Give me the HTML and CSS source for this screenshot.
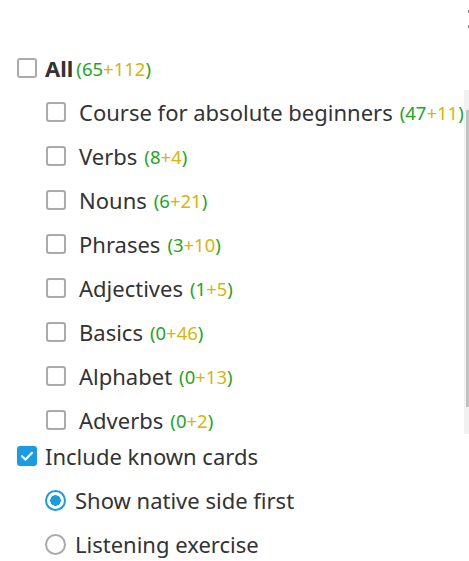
FILE: index.html
```html
<!DOCTYPE html>
<html>
<head>
<meta charset="utf-8">
<link rel="stylesheet" href="styles.css">
</head>
<body>
<div class="page">
  <div class="header"><span class="mark"></span><span class="mark"></span></div>
  <div class="row top">
    <span class="box"></span>
    <span class="label bold">All</span><span class="count tight"><span class="g">(65</span><span class="y">+112</span><span class="g">)</span></span>
  </div>
  <div class="list">
    <div class="items">
      <div class="row sub"><span class="box"></span><span class="label">Course for absolute beginners</span><span class="count"><span class="g">(47</span><span class="y">+11</span><span class="g">)</span></span></div>
      <div class="row sub"><span class="box"></span><span class="label">Verbs</span><span class="count"><span class="g">(8</span><span class="y">+4</span><span class="g">)</span></span></div>
      <div class="row sub"><span class="box"></span><span class="label">Nouns</span><span class="count"><span class="g">(6</span><span class="y">+21</span><span class="g">)</span></span></div>
      <div class="row sub"><span class="box"></span><span class="label">Phrases</span><span class="count"><span class="g">(3</span><span class="y">+10</span><span class="g">)</span></span></div>
      <div class="row sub"><span class="box"></span><span class="label">Adjectives</span><span class="count"><span class="g">(1</span><span class="y">+5</span><span class="g">)</span></span></div>
      <div class="row sub"><span class="box"></span><span class="label">Basics</span><span class="count"><span class="g">(0</span><span class="y">+46</span><span class="g">)</span></span></div>
      <div class="row sub"><span class="box"></span><span class="label">Alphabet</span><span class="count"><span class="g">(0</span><span class="y">+13</span><span class="g">)</span></span></div>
      <div class="row sub"><span class="box"></span><span class="label">Adverbs</span><span class="count"><span class="g">(0</span><span class="y">+2</span><span class="g">)</span></span></div>
    </div>
    <div class="scrollbar"><div class="thumb"></div></div>
  </div>
  <div class="row top">
    <span class="box checked"><svg viewBox="0 0 20 20" width="20" height="20"><path d="M5 10.2 L8.6 13.6 L15 6.8" fill="none" stroke="#fff" stroke-width="2.2" stroke-linecap="round" stroke-linejoin="round"/></svg></span>
    <span class="label">Include known cards</span>
  </div>
  <div class="row radio-row">
    <span class="radio on"></span>
    <span class="label">Show native side first</span>
  </div>
  <div class="row radio-row">
    <span class="radio"></span>
    <span class="label">Listening exercise</span>
  </div>
</div>
</body>
</html>
```
FILE: styles.css
```css
html, body {
  margin: 0;
  padding: 0;
  background: #ffffff;
  overflow: hidden;
}
.page {
  width: 469px;
  height: 561px;
  font-family: "Noto Sans", "Open Sans", sans-serif;
  color: #333333;
}
.header {
  height: 46px;
  display: flex;
  flex-direction: column;
  align-items: flex-end;
  padding-top: 10px;
  box-sizing: border-box;
  gap: 12px;
}
.mark {
  width: 1px;
  height: 3px;
  background: #888888;
}
.row {
  height: 44px;
  display: flex;
  align-items: center;
  white-space: nowrap;
}
.top {
  padding-left: 17px;
}
.sub {
  padding-left: 46px;
}
.radio-row {
  padding-left: 45px;
}
.box {
  width: 20px;
  height: 20px;
  box-sizing: border-box;
  border: 2px solid #aaaaaa;
  border-radius: 3px;
  flex: none;
  margin-right: 8px;
}
.sub .box {
  margin-right: 13px;
}
.box.checked {
  background: #1c9ce0;
  border: none;
  display: flex;
  align-items: center;
  justify-content: center;
}
.label {
  font-size: 22px;
}
.bold {
  font-weight: 700;
}
.count {
  font-size: 18.5px;
  margin-left: 7px;
}
.count.tight {
  margin-left: 3px;
}
.g {
  color: #1ea51e;
}
.y {
  color: #d7b50b;
}
.list {
  height: 344px;
  display: flex;
  overflow: hidden;
}
.items {
  width: 464px;
  flex: none;
  overflow: hidden;
}
.scrollbar {
  width: 5px;
  flex: none;
  background: #f1f1f1;
  padding: 20px 0 27px 2px;
  box-sizing: border-box;
}
.thumb {
  height: 100%;
  background: #c1c1c1;
}
.radio {
  width: 21px;
  height: 21px;
  box-sizing: border-box;
  border-radius: 50%;
  border: 2px solid #aaaaaa;
  flex: none;
  margin-right: 9px;
}
.radio.on {
  border: 2.5px solid #1c9ce0;
  background: radial-gradient(circle, #1c9ce0 0 5px, #ffffff 5.5px);
}
```
